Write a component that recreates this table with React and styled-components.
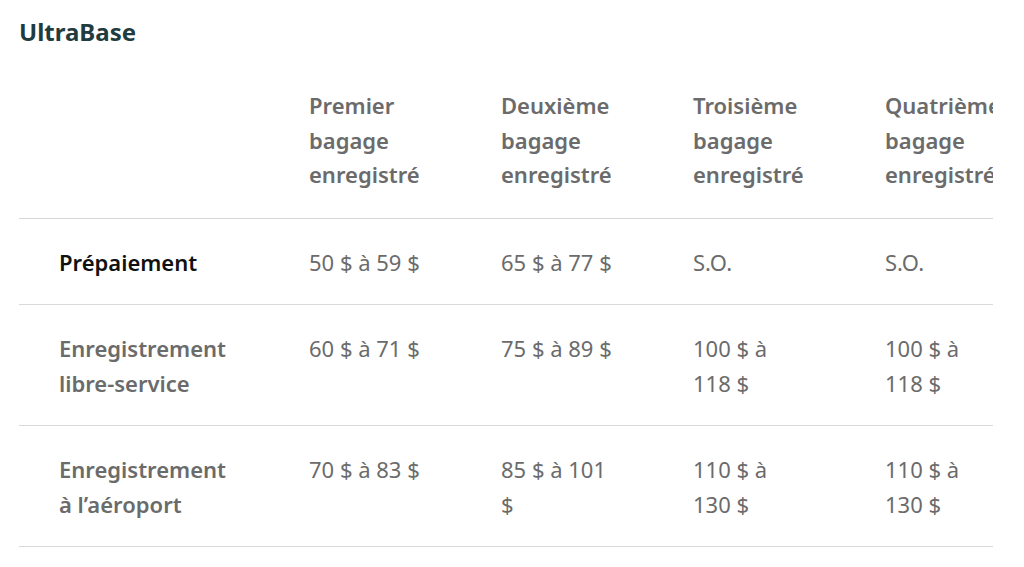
import React from "react";
import styled, { createGlobalStyle } from "styled-components";

const Global = createGlobalStyle`
  html, body { margin: 0; padding: 0; background: #fff; }
  body { font-family: "Noto Sans", "Open Sans", sans-serif; }
`;

const Page = styled.div`
  padding: 16px 31px 0 19px;
`;

const Title = styled.h2`
  margin: 0;
  font-size: 24px;
  line-height: 32px;
  font-weight: 700;
  color: #1f3c3f;
`;

const Scroller = styled.div`
  width: 974px;
  overflow: hidden;
  margin-top: 40px;
`;

const Table = styled.table`
  border-collapse: collapse;
  table-layout: fixed;
  width: 1058px;
  font-size: 22px;
  line-height: 34.5px;
`;

const Col = styled.col`
  width: ${(p) => p.$w}px;
`;

const HeadCell = styled.th`
  text-align: left;
  vertical-align: top;
  font-weight: 600;
  color: #6b6b6b;
  padding: 0 77px 26px 0;
  border-bottom: 1px solid #d6d6d6;
`;

const Row = styled.tr`
  border-bottom: 1px solid #d9d9d9;
`;

const LabelCell = styled.th`
  text-align: left;
  vertical-align: top;
  font-weight: 600;
  padding: 26px 70px 25px 40px;
  color: ${(p) => (p.$active ? "#111" : "#6b6b6b")};
`;

const Cell = styled.td`
  vertical-align: top;
  font-weight: 400;
  color: #6b6b6b;
  padding: 26px 77px 25px 0;
`;

const headers = [
  "Premier bagage enregistré",
  "Deuxième bagage enregistré",
  "Troisième bagage enregistré",
  "Quatrième bagage enregistré",
];

const rows = [
  { label: "Prépaiement", active: true, values: ["50 $ à 59 $", "65 $ à 77 $", "S.O.", "S.O."] },
  { label: "Enregistrement libre-service", values: ["60 $ à 71 $", "75 $ à 89 $", "100 $ à 118 $", "100 $ à 118 $"] },
  { label: "Enregistrement à l’aéroport", values: ["70 $ à 83 $", "85 $ à 101 $", "110 $ à 130 $", "110 $ à 130 $"] },
];

export default function App() {
  return (
    <>
      <Global />
      <Page>
        <Title>UltraBase</Title>
        <Scroller>
          <Table>
            <colgroup>
              <Col $w={290} />
              <Col $w={192} />
              <Col $w={192} />
              <Col $w={192} />
              <Col $w={192} />
            </colgroup>
            <thead>
              <tr>
                <HeadCell />
                {headers.map((h) => (
                  <HeadCell key={h}>{h}</HeadCell>
                ))}
              </tr>
            </thead>
            <tbody>
              {rows.map((r) => (
                <Row key={r.label}>
                  <LabelCell $active={r.active}>{r.label}</LabelCell>
                  {r.values.map((v, i) => (
                    <Cell key={i}>{v}</Cell>
                  ))}
                </Row>
              ))}
            </tbody>
          </Table>
        </Scroller>
      </Page>
    </>
  );
}
